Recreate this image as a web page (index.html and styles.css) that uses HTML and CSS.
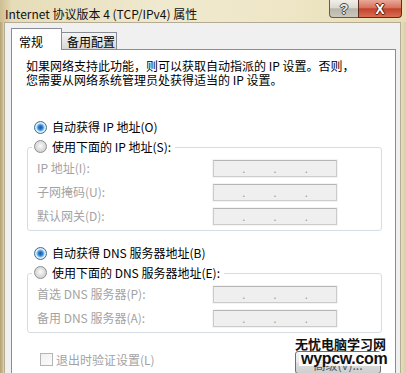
FILE: index.html
```html
<!DOCTYPE html>
<html lang="zh-CN">
<head>
  <meta charset="UTF-8" />
  <title>Internet 协议版本 4 (TCP/IPv4) 属性</title>
  <link rel="stylesheet" href="styles.css">
</head>
<body>
  <div class="window">
    <div class="titlebar">
      <div class="title">Internet 协议版本 4 (TCP/IPv4) 属性</div>
      <div class="caption-buttons">
        <div class="cap-btn help">?</div>
        <div class="cap-btn close">X</div>
      </div>
    </div>

    <div class="client">
      <div class="tabs">
        <div class="tab active">常规</div>
        <div class="tab">备用配置</div>
      </div>

      <div class="panel">
        <p class="intro">如果网络支持此功能，则可以获取自动指派的 IP 设置。否则，<br>您需要从网络系统管理员处获得适当的 IP 设置。</p>

        <div class="section">
          <div class="radio-row"><span class="radio checked"></span>自动获得 IP 地址(O)</div>
          <div class="group">
            <div class="legend-row">
              <span class="legend"><span class="radio"></span>使用下面的 IP 地址(S):</span>
            </div>
            <div class="field"><span class="label">IP 地址(I):</span><span class="ipbox"><i></i>.<i></i>.<i></i>.<i></i></span></div>
            <div class="field"><span class="label">子网掩码(U):</span><span class="ipbox"><i></i>.<i></i>.<i></i>.<i></i></span></div>
            <div class="field"><span class="label">默认网关(D):</span><span class="ipbox"><i></i>.<i></i>.<i></i>.<i></i></span></div>
          </div>

          <div class="radio-row dns"><span class="radio checked"></span>自动获得 DNS 服务器地址(B)</div>
          <div class="group">
            <div class="legend-row">
              <span class="legend"><span class="radio"></span>使用下面的 DNS 服务器地址(E):</span>
            </div>
            <div class="field"><span class="label">首选 DNS 服务器(P):</span><span class="ipbox"><i></i>.<i></i>.<i></i>.<i></i></span></div>
            <div class="field"><span class="label">备用 DNS 服务器(A):</span><span class="ipbox"><i></i>.<i></i>.<i></i>.<i></i></span></div>
          </div>

          <div class="footer">
            <div class="check-row"><span class="checkbox"></span>退出时验证设置(L)</div>
            <div class="button">高级(V)...</div>
          </div>
        </div>
      </div>
    </div>

    <div class="watermark">
      <div class="wm-cn">无忧电脑学习网</div>
      <div class="wm-en">wypcw.com</div>
    </div>
  </div>
</body>
</html>
```

FILE: styles.css
```css
* {
  box-sizing: border-box;
}

body {
  margin: 0;
  width: 406px;
  height: 373px;
  overflow: hidden;
  font-family: "Noto Sans CJK SC", sans-serif;
  font-size: 12px;
  line-height: 14px;
  color: #000;
  background: linear-gradient(to right, #b5a274 0, #cdbd90 3px, #e9e2c6 4px, #ece6cc 400px, #e3dab8 402px, #d9cfa9 406px);
}

.window {
  position: relative;
  height: 373px;
  display: flex;
  flex-direction: column;
  padding: 0 5px 0 4px;
}

/* title bar */
.titlebar {
  height: 28px;
  margin: 0 -5px 0 -4px;
  padding: 0 5px 0 5px;
  display: flex;
  align-items: flex-start;
  background: linear-gradient(to right, #cdbd91 0, #e6dcb8 12px, #efe9cf 40%, #eee6c6 70%, #e7dcb3 100%);
}

.title {
  flex: 1;
  padding-top: 6px;
  line-height: 16px;
  font-size: 12px;
  color: #111;
}

.caption-buttons {
  display: flex;
  flex: none;
  margin-right: -1px;
}

.cap-btn {
  height: 18px;
  flex: none;
  display: flex;
  align-items: center;
  justify-content: center;
  font-family: "Liberation Sans", sans-serif;
  font-weight: bold;
  font-size: 14px;
  line-height: 14px;
  color: #fff;
}

.help {
  width: 29px;
  border: 1px solid #5f5d58;
  border-top: 0;
  border-right: 0;
  border-radius: 0 0 0 4px;
  background: linear-gradient(#f1efea, #dcd9d0 45%, #b9b5aa 52%, #cbc7bc);
  color: #e8e8e8;
  text-shadow: 1px 0 0 #4a4a4a, -1px 0 0 #4a4a4a, 0 1px 0 #4a4a4a, 0 -1px 0 #4a4a4a;
}

.close {
  width: 44px;
  border: 1px solid #5e2b22;
  border-top: 0;
  border-radius: 0 0 4px 0;
  background: linear-gradient(#e9a999, #d7735e 45%, #c2432c 52%, #d96d52);
  text-shadow: 1px 0 0 #5a1a0e, -1px 0 0 #5a1a0e, 0 1px 0 #5a1a0e, 0 -1px 0 #5a1a0e;
}

/* client area */
.client {
  flex: 1;
  display: flex;
  flex-direction: column;
  background: #f0f0f0;
  border: 1px solid #b3ab94;
  border-bottom: 0;
  padding: 5px 4px 0 6px;
}

.tabs {
  display: flex;
  align-items: flex-end;
  height: 22px;
  margin-bottom: -1px;
  position: relative;
  z-index: 1;
}

.tab {
  height: 17px;
  width: 55px;
  margin-bottom: 1px;
  padding: 1px 0 0 5px;
  line-height: 16px;
  border: 1px solid #898c95;
  border-bottom: 0;
  border-left: 0;
  background: linear-gradient(#f4f4f4, #e6e6e6 50%, #d7d7d7);
}

.tab.active {
  height: 22px;
  width: 51px;
  margin-bottom: 0;
  padding: 3px 0 0 7px;
  line-height: 20px;
  border-left: 1px solid #898c95;
  border-right: 1px solid #898c95;
  background: #fff;
}

.panel {
  flex: 1;
  background: #fff;
  border: 1px solid #898c95;
  border-bottom: 0;
  padding: 9px 0 0 0;
}

.intro {
  margin: 0 0 0 14px;
  line-height: 14px;
}

.section {
  width: 355px;
  margin: 30px 0 0 15px;
}

.radio-row {
  height: 20px;
  display: flex;
  align-items: center;
  gap: 5px;
  padding-left: 7px;
}

.radio-row.dns {
  margin-top: 12px;
}

.radio {
  width: 13px;
  height: 13px;
  flex: none;
  border-radius: 50%;
  border: 1px solid #8e8f8f;
  background: radial-gradient(circle at 50% 45%, #fdfdfd 0, #e4e4e4 3px, #d2d2d2 6px);
}

.radio.checked {
  border-color: #3f6f96;
  background: radial-gradient(circle, #1d5aa0 0, #2c7ccc 2px, #7ec0ef 3.5px, #e9f2f9 4.5px, #cfd9e2 6px);
}

.group {
  margin-top: 10px;
  border: 1px solid #d5dde2;
  border-radius: 3px;
  padding: 0 0 2px 9px;
}

.legend-row {
  height: 19px;
  margin-top: -11px;
  display: flex;
  align-items: center;
}

.legend {
  display: inline-flex;
  align-items: center;
  gap: 5px;
  margin-left: -5px;
  padding: 0 4px 0 2px;
  background: #fff;
}

.field {
  height: 24px;
  display: grid;
  grid-template-columns: 176px 124px;
  align-items: center;
}

.label {
  color: #a3a3a3;
}

.ipbox {
  height: 17px;
  display: grid;
  grid-template-columns: 1fr auto 1fr auto 1fr auto 1fr;
  align-items: end;
  line-height: 12px;
  padding-bottom: 2px;
  font-size: 11px;
  color: #9a9a9a;
  background: #efefef;
  border: 1px solid #cbcbcb;
  border-top-color: #b5b5b5;
  box-shadow: 0 0 0 1px #f4f4f4;
}

.footer {
  margin-top: 18px;
  display: flex;
  justify-content: space-between;
  align-items: flex-start;
}

.check-row {
  display: flex;
  align-items: center;
  gap: 3px;
  margin-top: 2px;
  padding-left: 13px;
  height: 13px;
  color: #a3a3a3;
}

.checkbox {
  width: 13px;
  height: 13px;
  border: 1px solid #b5b5b5;
  background: linear-gradient(135deg, #f0f0f0, #fbfbfb);
}

.button {
  width: 86px;
  height: 23px;
  margin-right: 1px;
  border: 1px solid #707070;
  border-radius: 3px;
  padding-top: 6px;
  text-align: center;
  line-height: 14px;
  color: #555;
  background: linear-gradient(#f3f3f3, #ebebeb 48%, #dddddd 52%, #cfcfcf);
}

/* watermark over the bottom right corner */
.watermark {
  position: absolute;
  left: 295px;
  top: 336px;
  width: 111px;
}

.wm-cn {
  font-weight: bold;
  font-size: 13px;
  line-height: 16px;
  color: #111;
}

.wm-en {
  display: inline-block;
  margin-left: 4px;
  padding: 0 2px;
  font-family: "Liberation Sans", sans-serif;
  font-weight: bold;
  font-size: 16px;
  line-height: 14px;
  letter-spacing: -0.3px;
  color: #111;
  background: rgba(255, 255, 255, 0.85);
}
```
